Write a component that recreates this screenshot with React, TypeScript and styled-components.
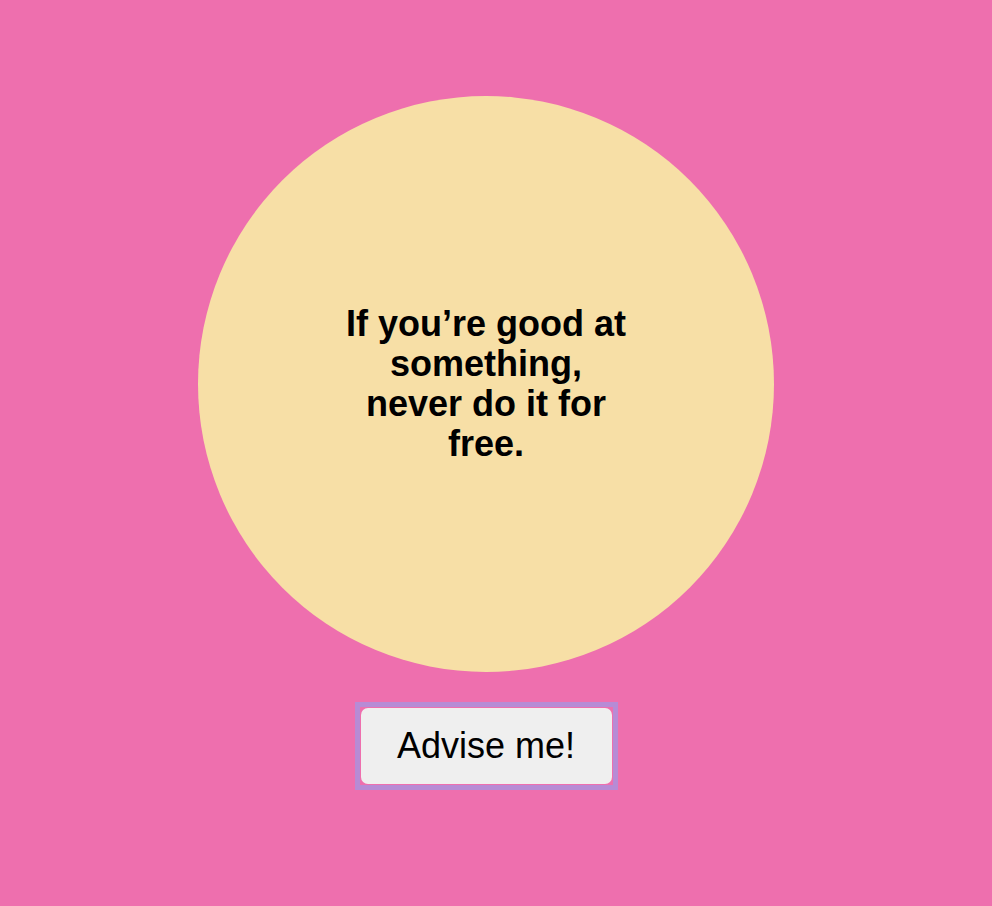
import React from "react";
import styled, { createGlobalStyle } from "styled-components";

const GlobalStyle = createGlobalStyle`
  html, body {
    margin: 0;
    padding: 0;
    background: #ee6fae;
  }
  body {
    font-family: "Liberation Sans", Arial, Helvetica, sans-serif;
  }
`;

const Page = styled.main`
  min-height: 906px;
  box-sizing: border-box;
  display: flex;
  flex-direction: column;
  align-items: center;
  padding: 96px 20px 0 0;
  gap: 30px;
`;

const Bubble = styled.div`
  width: 576px;
  height: 576px;
  border-radius: 50%;
  background: #f7dfa6;
  display: flex;
  align-items: center;
  justify-content: center;
`;

const Quote = styled.p`
  margin: 0;
  width: 290px;
  text-align: center;
  font-size: 36px;
  font-weight: 700;
  line-height: 40px;
  color: #000;
`;

const ButtonFrame = styled.div`
  border: 5px solid #b78bd5;
  padding: 1px;
  display: flex;
`;

const AdviseButton = styled.button`
  width: 251px;
  height: 76px;
  border: none;
  border-radius: 7px;
  background: #efefef;
  color: #000;
  font-family: "Liberation Sans", Arial, Helvetica, sans-serif;
  font-size: 36px;
  cursor: pointer;
`;

export default function App() {
  return (
    <>
      <GlobalStyle />
      <Page>
        <Bubble>
          <Quote>If you’re good at something, never do it for free.</Quote>
        </Bubble>
        <ButtonFrame>
          <AdviseButton>Advise me!</AdviseButton>
        </ButtonFrame>
      </Page>
    </>
  );
}
